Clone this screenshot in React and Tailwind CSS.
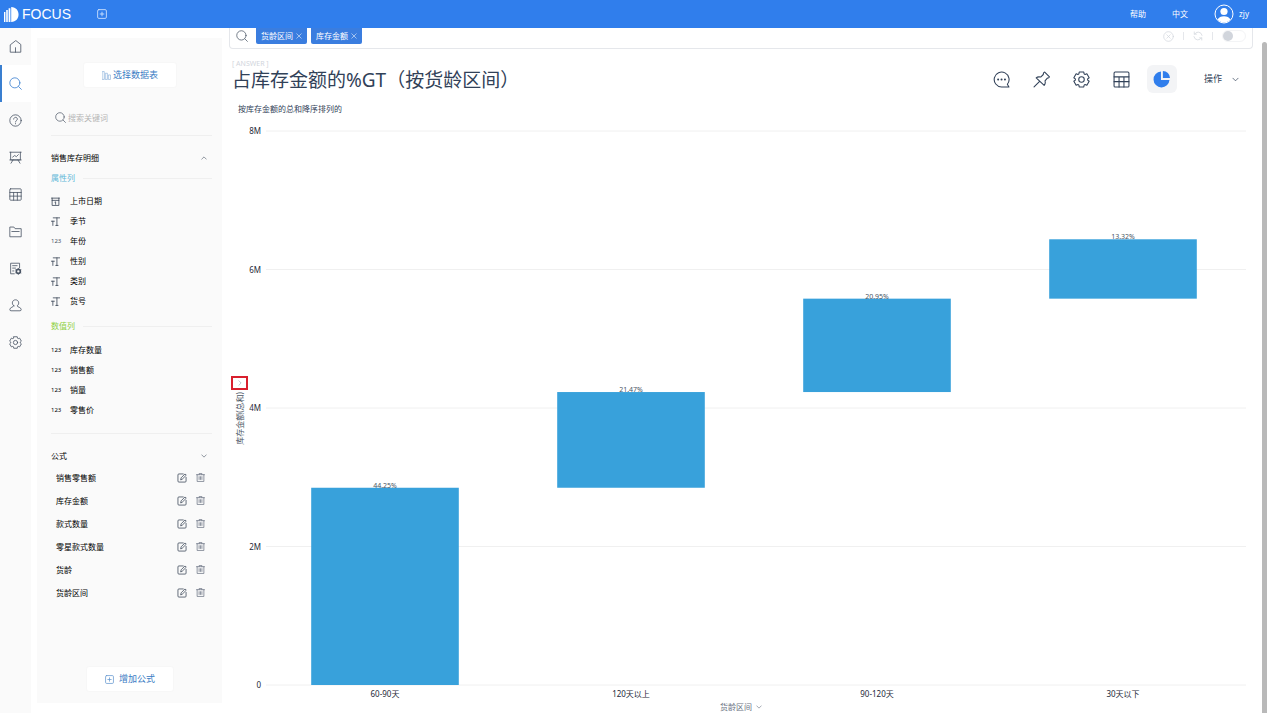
import { useState } from "react";

const attributeColumns = [
    { type: "date", name: "上市日期" },
    { type: "text", name: "季节" },
    { type: "number", name: "年份", muted: true },
    { type: "text", name: "性别" },
    { type: "text", name: "类别" },
    { type: "text", name: "货号" },
];

const measureColumns = [
    { type: "number", name: "库存数量" },
    { type: "number", name: "销售额" },
    { type: "number", name: "销量" },
    { type: "number", name: "零售价" },
];

const formulas = ["销售零售额", "库存金额", "款式数量", "零星款式数量", "货龄", "货龄区间"];

const TOTAL = 6.437; // millions
const AXIS_MAX = 8;
const ticks = [8, 6, 4, 2, 0];
const shares = [
    { name: "60-90天", percent: 44.25 },
    { name: "120天以上", percent: 21.47 },
    { name: "90-120天", percent: 20.95 },
    { name: "30天以下", percent: 13.32 },
];

function Icon({ className, children, width = 1 }) {
    return (
        <svg viewBox="0 0 16 16" fill="none" stroke="currentColor" strokeWidth={width} strokeLinecap="round" strokeLinejoin="round" className={className} aria-hidden="true">
            {children}
        </svg>
    );
}

function ChevronIcon({ up, className }) {
    return (
        <Icon className={className} width={1.6}>
            <path d={up ? "M2 11l6-6 6 6" : "M2 5l6 6 6-6"} />
        </Icon>
    );
}

function CloseIcon({ className }) {
    return (
        <Icon className={className} width={1.4}>
            <path d="M2 2l12 12M14 2L2 14" />
        </Icon>
    );
}

function SearchIcon({ className }) {
    return (
        <Icon className={className}>
            <circle cx="7.2" cy="7.2" r="6.2" />
            <path d="M11.8 11.8l3.4 3.4" />
        </Icon>
    );
}

function TableIcon({ className }) {
    return (
        <Icon className={className}>
            <rect x="1" y="1" width="14" height="14" rx="1" />
            <path d="M1 5.5h14M1 10h14M5.7 5.5V15M10.3 5.5V15" />
        </Icon>
    );
}

function GearIcon({ className }) {
    return (
        <Icon className={className}>
            <path d="M5.84.92h4.32l.29 1.82.88.51 1.72-.66 2.16 3.75-1.43 1.15v1.02l1.43 1.15-2.16 3.75-1.72-.66-.88.51-.29 1.82H5.84l-.29-1.82-.88-.51-1.72.66L.79 9.66l1.43-1.15V7.49L.79 6.34l2.16-3.75 1.72.66.88-.51z" />
            <circle cx="8" cy="8" r="2.6" />
        </Icon>
    );
}

function PlusBoxIcon({ className }) {
    return (
        <Icon className={className} width={1.3}>
            <rect x="1" y="1" width="14" height="14" rx="2" />
            <path d="M8 5v6M5 8h6" />
        </Icon>
    );
}

function EditIcon({ className }) {
    return (
        <Icon className={className} width={1.2}>
            <path d="M10 1.5H3A1.5 1.5 0 0 0 1.5 3v10A1.5 1.5 0 0 0 3 14.5h10a1.5 1.5 0 0 0 1.5-1.5V7" />
            <path d="M6 10.5l.6-2.8 6.2-6.2 2 2-6.2 6.2z" />
        </Icon>
    );
}

function TrashIcon({ className }) {
    return (
        <Icon className={className} width={1.3}>
            <path d="M1 3h14M5.5 3V1h5v2M2 3v12h12V3M5.5 6.5v5M8 6.5v5M10.5 6.5v5" />
        </Icon>
    );
}

const navItems = [
    { label: "首页", icon: <Icon className="size-[13px]"><path d="M8 1L1.5 6v9h13V6zM8 9.5V15" /></Icon> },
    { label: "搜索", icon: <SearchIcon className="size-[13px]" /> },
    {
        label: "问答",
        icon: (
            <Icon className="size-[13px]">
                <circle cx="8" cy="8" r="7" />
                <path d="M5.7 6.3C5.7 3.3 10.3 3.3 10.3 6.3 10.3 8 8 8 8 9.8M8 11.8v.3" />
            </Icon>
        ),
    },
    { label: "看板", icon: <Icon className="size-[13px]"><path d="M1 1.5h14M2 1.5V11h12V1.5M1 11h14M5 11l-2.5 4M11 11l2.5 4M4.5 7.5l2.5-2L9 7l2.5-2.5" /></Icon> },
    { label: "数据表", icon: <TableIcon className="size-[13px]" /> },
    { label: "文件夹", icon: <Icon className="size-[13px]"><path d="M1 14V2.5h5l1.5 2H15V14zM3.5 8h9" /></Icon> },
    {
        label: "数据管理",
        icon: (
            <Icon className="size-[13px]">
                <path d="M6.5 14.5H2v-13h11V7M4.5 4.5H10M4.5 7.5H8M4.5 11H6" />
                <circle cx="11.5" cy="11.5" r="2.5" strokeWidth="2" />
                <path d="M11.5 7.8v1M11.5 14.2v1M8.3 9.7l.9.5M13.8 12.8l.9.5M8.3 13.3l.9-.5M13.8 10.2l.9-.5" />
            </Icon>
        ),
    },
    { label: "用户", icon: <Icon className="size-[13px]"><path d="M6 8.5C2.5 6 4 1 8 1s5.5 5 2 7.5c0 1.5 5 1.5 5 4.5 0 1-.5 1.5-1.5 1.5h-11C1.5 14.5 1 14 1 13c0-3 5-3 5-4.5z" /></Icon> },
    { label: "设置", icon: <GearIcon className="size-[13px]" /> },
];

function TopBar() {
    return (
        <header className="flex h-7 items-center bg-[#307eec] pr-[18px] pl-1 text-[8px] text-white">
            <svg viewBox="0 0 15 15" className="size-[15px]" fill="currentColor" aria-hidden="true">
                <path d="M0 5h1.4v10H0zM2.2 3h1.6v12H2.2zM4.6 1.2h1.8V15H4.6zM7.2 0C17 0 17 15 7.2 15z" />
            </svg>
            <span className="ml-[3px] font-['Liberation_Sans',sans-serif] text-[14px] leading-4">FOCUS</span>
            <button aria-label="新建" className="ml-[26px] text-blue-100">
                <PlusBoxIcon className="size-[10px]" />
            </button>
            <nav className="ml-auto flex items-center">
                <a href="#help">帮助</a>
                <a href="#lang" className="ml-[26px]">中文</a>
                <a href="#user" className="ml-[26px] flex items-center gap-[5px]">
                    <svg viewBox="0 0 20 20" className="size-5" aria-hidden="true">
                        <circle cx="10" cy="10" r="9" fill="none" stroke="white" strokeWidth="1" />
                        <circle cx="10" cy="7.5" r="3.6" fill="white" />
                        <path d="M3.5 15.5c2-4.5 11-4.5 13 0-3.5 4-9.5 4-13 0z" fill="white" />
                    </svg>
                    zjy
                </a>
            </nav>
        </header>
    );
}

function NavRail() {
    const [active, setActive] = useState(1);

    return (
        <nav className="flex w-[31px] shrink-0 flex-col bg-[#fafafa]">
            {navItems.map((item, i) => (
                <button
                    key={item.label}
                    aria-label={item.label}
                    onClick={() => setActive(i)}
                    className={
                        i === active
                            ? "flex h-[37px] items-center border-l-2 border-[#3a7fd0] bg-white pl-[7px] text-[#3a7fd0]"
                            : "flex h-[37px] items-center pl-[9px] text-gray-600"
                    }
                >
                    {item.icon}
                </button>
            ))}
        </nav>
    );
}

function ColumnTypeIcon({ type, muted }) {
    if (type === "date") {
        return (
            <Icon className="size-[9px]" width={1.4}>
                <path d="M1 2h14M2 2v13h12V2M2 6h12M7 9l1.2-.5V13" />
            </Icon>
        );
    }
    if (type === "text") {
        return (
            <Icon className="size-[9px]" width={1.4}>
                <path d="M4 1.5h11.5M10.5 1.5V15M8.5 15h4M.5 7.5H6M3.3 7.5V15" />
            </Icon>
        );
    }
    return <span className={muted ? "text-[6px] text-gray-600" : "text-[6px] text-black"}>123</span>;
}

function ColumnList({ columns }) {
    return (
        <ul>
            {columns.map((column) => (
                <li key={column.name} className="flex h-5 items-center">
                    <span className="flex w-[19px] items-center text-gray-700">
                        <ColumnTypeIcon type={column.type} muted={column.muted} />
                    </span>
                    {column.name}
                </li>
            ))}
        </ul>
    );
}

function DataPanel() {
    const [keyword, setKeyword] = useState("");

    return (
        <aside className="mt-[10px] mb-[10px] ml-[6px] flex w-[185px] shrink-0 flex-col bg-[#fafafa] pt-[25px] pr-[10px] pb-3 pl-[14px] text-[8px] leading-3 text-black">
            <button className="ml-[33px] flex h-6 w-[92px] items-center justify-center gap-[2px] rounded-xs bg-white text-[9px] text-[#3a7cc4] shadow-[0_0_2px_#eeeeee]">
                <Icon className="size-[9px] opacity-70">
                    <path d="M1 1h3v14H1zM6.5 4h3v11h-3zM12 7h3v8h-3z" />
                </Icon>
                选择数据表
            </button>

            <label className="mt-[13px] flex h-9 items-center gap-[2px] border-b border-[#efefef] pl-1 text-gray-600">
                <SearchIcon className="size-[11px]" />
                <input
                    value={keyword}
                    onChange={(e) => setKeyword(e.target.value)}
                    placeholder="搜索关键词"
                    aria-label="搜索关键词"
                    className="min-w-0 flex-1 outline-none placeholder:text-[#b5b5b5]"
                />
            </label>

            <button className="mt-3 flex h-5 items-center justify-between pr-[5px]">
                销售库存明细
                <ChevronIcon up className="size-[6px] text-gray-600" />
            </button>
            <h3 className="flex h-5 items-center gap-2 text-[#5fb8d8]">
                属性列
                <span className="h-px flex-1 bg-[#efefef]" />
            </h3>
            <div className="mt-[3px]">
                <ColumnList columns={attributeColumns} />
            </div>
            <h3 className="mt-[5px] flex h-5 items-center gap-2 text-[#8fd03f]">
                数值列
                <span className="h-px flex-1 bg-[#efefef]" />
            </h3>
            <div className="mt-1">
                <ColumnList columns={measureColumns} />
            </div>

            <button className="mt-[13px] flex h-[33px] items-center justify-between border-t border-[#efefef] pt-3 pr-[5px]">
                公式
                <ChevronIcon className="size-[6px] text-gray-600" />
            </button>
            <ul>
                {formulas.map((name) => (
                    <li key={name} className="flex h-[23px] items-center gap-[9px] pr-[7px] pl-[5px]">
                        <span className="flex-1">{name}</span>
                        <button aria-label={`编辑 ${name}`} className="text-gray-700">
                            <EditIcon className="size-[10px]" />
                        </button>
                        <button aria-label={`删除 ${name}`} className="text-gray-500">
                            <TrashIcon className="size-[9px]" />
                        </button>
                    </li>
                ))}
            </ul>

            <button className="mt-auto ml-[36px] flex h-6 w-[86px] items-center justify-center gap-[5px] rounded-xs bg-white text-[9px] text-[#3a7cc4] shadow-[0_0_2px_#eeeeee]">
                <PlusBoxIcon className="size-[9px] opacity-80" />
                增加公式
            </button>
        </aside>
    );
}

function QueryBar() {
    const [words, setWords] = useState(["货龄区间", "库存金额"]);

    return (
        <div className="flex h-[21px] items-start rounded-b-sm border border-t-0 border-gray-200 pr-[6px] pl-[6px]">
            <SearchIcon className="mt-[2px] size-3 text-gray-600" />
            <div className="ml-2 flex gap-1">
                {words.map((word) => (
                    <span key={word} className="flex h-4 items-center gap-[3px] rounded-b-xs bg-[#3a7ddf] px-[5px] text-[8px] leading-3 text-white">
                        {word}
                        <button aria-label={`移除 ${word}`} onClick={() => setWords(words.filter((w) => w !== word))}>
                            <CloseIcon className="size-[6px]" />
                        </button>
                    </span>
                ))}
            </div>
            <div className="ml-auto flex h-4 items-center gap-[9px] text-gray-300">
                <button aria-label="清空" onClick={() => setWords([])}>
                    <Icon className="size-[11px]">
                        <circle cx="8" cy="8" r="7" />
                        <path d="M5.5 5.5l5 5M10.5 5.5l-5 5" />
                    </Icon>
                </button>
                <span className="h-2 w-px bg-gray-200" />
                <button aria-label="刷新">
                    <Icon className="size-[10px]" width={1.2}>
                        <path d="M14.5 7A6.5 6.5 0 0 0 2.5 5M2 1.5V5h3.5M1.5 9a6.5 6.5 0 0 0 12 2M14 14.5V11h-3.5" />
                    </Icon>
                </button>
                <span className="h-2 w-px bg-gray-200" />
                <input
                    type="checkbox"
                    role="switch"
                    aria-label="自动查询"
                    className="h-3 w-6 appearance-none rounded-full border border-gray-100 bg-white before:block before:size-[10px] before:rounded-full before:bg-gray-300 checked:before:ml-3"
                />
            </div>
        </div>
    );
}

function Toolbar() {
    return (
        <div className="mt-[5px] flex items-center gap-[10px] pr-[14px] text-slate-700">
            <button aria-label="评论" className="flex h-7 w-[30px] items-center justify-center">
                <Icon className="size-[17px]">
                    <path d="M13.5 12.5A7 7 0 1 0 8 15h7z" />
                    <path d="M4.8 8h.1M8 8h.1M11.2 8h.1" strokeWidth="1.8" />
                </Icon>
            </button>
            <button aria-label="固定" className="flex h-7 w-[30px] items-center justify-center">
                <Icon className="size-[17px]">
                    <path d="M11 1l4.5 4.5c-.3.8-1 1.2-2 1.2l-2.2 2.5c.5 1.8.1 3.4-.8 4.3L3 6.5c.9-.9 2.5-1.2 4.2-.8L9.7 3.3C9.6 2.3 10.2 1.3 11 1zM6 10L1 15" />
                </Icon>
            </button>
            <button aria-label="图表设置" className="flex h-7 w-[30px] items-center justify-center">
                <GearIcon className="size-[17px]" />
            </button>
            <button aria-label="表格" className="flex h-7 w-[30px] items-center justify-center">
                <TableIcon className="size-[17px]" />
            </button>
            <button aria-label="图形" className="flex h-7 w-[30px] items-center justify-center rounded-md bg-gray-100 text-[#307eec]">
                <svg viewBox="0 0 16 16" fill="currentColor" className="size-[17px]" aria-hidden="true">
                    <path d="M7.5.5A7.5 7.5 0 1 0 15.5 8.5H7.5z" />
                    <path d="M9.3 0A6.8 6.8 0 0 1 16 6.7H9.3z" />
                </svg>
            </button>
            <button className="ml-[17px] flex items-center gap-[10px] text-[9px] leading-3">
                操作
                <ChevronIcon className="size-[7px]" />
            </button>
        </div>
    );
}

function WaterfallChart() {
    let running = 0;
    const bars = shares.map((share, i) => {
        running += share.percent;
        return {
            ...share,
            center: (i + 0.5) * (100 / shares.length),
            top: 100 - ((running / 100) * TOTAL * 100) / AXIS_MAX,
            height: ((share.percent / 100) * TOTAL * 100) / AXIS_MAX,
        };
    });

    return (
        <div className="mt-4 flex flex-1 flex-col">
            <div className="flex flex-1 pr-[7px]">
                <div className="mr-3 flex w-[21px] flex-col items-center justify-center gap-[2px] pt-[5px] text-[8px] leading-3 text-gray-600">
                    <button aria-label="纵轴选项" className="flex h-[14px] w-[17px] items-center justify-center border-2 border-[#d9202e] text-gray-400">
                        <ChevronIcon className="size-[6px] -rotate-90" />
                    </button>
                    <span className="rotate-180 whitespace-nowrap [text-orientation:sideways] [writing-mode:vertical-rl]">库存金额(总和)</span>
                </div>
                <svg className="min-h-[400px] flex-1 overflow-visible" role="img" aria-label="货龄区间">
                    {ticks.map((tick) => {
                        const y = `${100 - (tick * 100) / AXIS_MAX}%`;
                        return (
                            <g key={tick}>
                                <line x1="4" x2="100%" y1={y} y2={y} className="stroke-[#f0f0f0]" />
                                <text x="-1" y={y} dy="3" textAnchor="end" className="fill-gray-800 text-[8px]">
                                    {tick ? `${tick}M` : 0}
                                </text>
                            </g>
                        );
                    })}
                    {bars.map((bar) => (
                        <g key={bar.name}>
                            <rect x={`${bar.center - 7.5}%`} y={`${bar.top}%`} width="15%" height={`${bar.height}%`} fill="#38a1db" />
                            <text x={`${bar.center}%`} y={`${bar.top}%`} textAnchor="middle" className="fill-gray-600 text-[7px]">
                                {bar.percent}%
                            </text>
                            <text x={`${bar.center}%`} y="100%" dy="12" textAnchor="middle" className="fill-gray-800 text-[8px]">
                                {bar.name}
                            </text>
                        </g>
                    ))}
                </svg>
            </div>
            <button className="mx-auto mt-4 flex h-3 items-center gap-1 text-[8px] leading-3 text-gray-500">
                货龄区间
                <ChevronIcon className="size-[6px]" />
            </button>
        </div>
    );
}

export default function App() {
    return (
        <div className="flex min-h-screen flex-col bg-white font-['Noto_Sans','Noto_Sans_CJK_SC',sans-serif]">
            <TopBar />
            <div className="flex flex-1">
                <NavRail />
                <DataPanel />
                <main className="mr-[9px] ml-[7px] flex min-w-0 flex-1 flex-col">
                    <QueryBar />
                    <div className="flex items-start justify-between pt-[11px]">
                        <div className="pl-[3px]">
                            <p className="text-[7px] leading-[8px] text-gray-300">[ ANSWER ]</p>
                            <h1 className="text-[19px] leading-6 font-normal text-slate-700">占库存金额的%GT（按货龄区间）</h1>
                        </div>
                        <Toolbar />
                    </div>
                    <p className="mt-[10px] pl-[9px] text-[8px] leading-3 text-slate-700">按库存金额的总和降序排列的</p>
                    <WaterfallChart />
                </main>
                <div className="mt-[14px] w-[5px] shrink-0 rounded-t-full bg-[#b9b9b9]" />
            </div>
        </div>
    );
}
